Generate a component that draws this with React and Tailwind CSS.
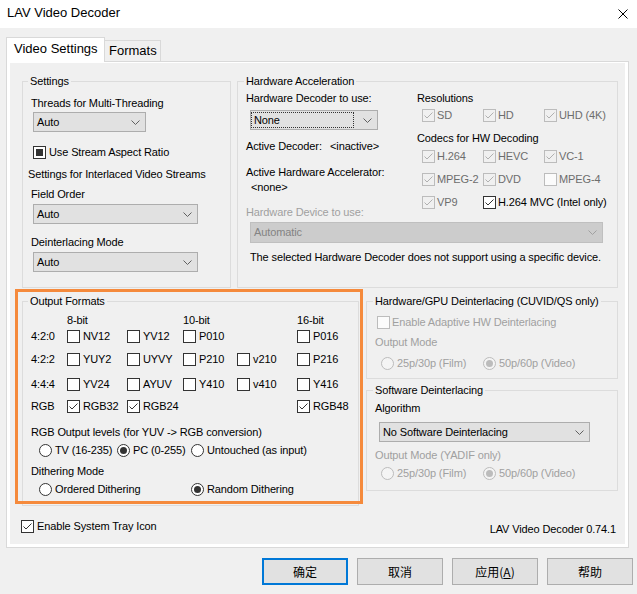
import React from "react";

const Chevron = ({ color = "#606060" }) => (
  <svg width="9" height="5" viewBox="0 0 9 5" className="shrink-0">
    <path d="M0.5 0.5 L4.5 4.5 L8.5 0.5" fill="none" stroke={color} strokeWidth="1" />
  </svg>
);

function Select({ value, className = "", disabled, focus }) {
  const skin = disabled
    ? "border-[#bfbfbf] bg-[#cccccc] text-[#838383]"
    : "border-[#adadad] bg-[#e1e1e1]";
  return (
    <div
      className={`flex items-center justify-between border ${skin} ${focus ? "pl-[0px]" : "pl-[3px]"} pr-[5px] shrink-0 ${className}`}
    >
      {focus ? (
        <span className="flex-1 h-[16px] mr-[9px] border border-dotted border-[#333] pl-[2px] flex items-center">
          {value}
        </span>
      ) : (
        <span className="whitespace-nowrap">{value}</span>
      )}
      <Chevron color={disabled ? "#a0a0a0" : "#606060"} />
    </div>
  );
}

function Box({ checked, disabled, indeterminate }) {
  const skin = disabled
    ? checked
      ? "border-[#bcbcbc] bg-[#f0f0f0]"
      : "border-[#bcbcbc] bg-[#fbfbfb]"
    : "border-[#333333] bg-white";
  return (
    <span className={`w-[13px] h-[13px] border ${skin} flex items-center justify-center shrink-0`}>
      {checked && (
        <svg width="11" height="11" viewBox="0 0 11 11">
          <path
            d="M1.5 5.5 L4 8 L9.5 2.5"
            fill="none"
            stroke={disabled ? "#b0b0b0" : "#333"}
            strokeWidth="1"
          />
        </svg>
      )}
      {indeterminate && <span className="w-[7px] h-[7px] bg-[#333]" />}
    </span>
  );
}

function Check({ label, checked, indeterminate, disabled, className = "", gap = "ml-[3px]", textClass = "text-[#6d6d6d]" }) {
  return (
    <div className={`flex items-center h-[13px] ${className}`}>
      <Box checked={checked} disabled={disabled} indeterminate={indeterminate} />
      <span className={`${gap} whitespace-nowrap ${disabled ? textClass : ""}`}>{label}</span>
    </div>
  );
}

function Radio({ checked, disabled }) {
  const skin = disabled ? "border-[#bcbcbc] bg-[#f4f4f4]" : "border-[#333333] bg-white";
  return (
    <span className={`w-[13px] h-[13px] rounded-full border ${skin} flex items-center justify-center shrink-0`}>
      {checked && (
        <span className={`w-[7px] h-[7px] rounded-full ${disabled ? "bg-[#bcbcbc]" : "bg-[#333]"}`} />
      )}
    </span>
  );
}

function RadioItem({ label, checked, disabled, className = "" }) {
  return (
    <div className={`flex items-center h-[13px] shrink-0 ${className}`}>
      <Radio checked={checked} disabled={disabled} />
      <span className={`ml-[3px] whitespace-nowrap ${disabled ? "text-[#a0a0a0]" : ""}`}>{label}</span>
    </div>
  );
}

function Group({ title, className = "", labelLeft = "left-[6px]", children }) {
  return (
    <div className={`relative border border-[#dcdcdc] shrink-0 ${className}`}>
      <span className={`absolute ${labelLeft} -top-[7px] px-[2px] bg-[#f0f0f0] leading-[13px] whitespace-nowrap`}>
        {title}
      </span>
      {children}
    </div>
  );
}

const fmtCols = ["w-[60px]", "w-[56px]", "w-[54px]", "w-[60px]", ""];

function FmtRow({ label, items, className = "" }) {
  return (
    <div className={`flex items-center h-[13px] ${className}`}>
      <span className="w-[36px] shrink-0">{label}</span>
      {items.map((it, i) => (
        <div key={i} className={`shrink-0 ${fmtCols[i]}`}>
          {it && <Check label={it[0]} checked={it[1]} />}
        </div>
      ))}
    </div>
  );
}

function Btn({ children, primary }) {
  return (
    <div
      className={`w-[86px] h-[27px] flex items-center justify-center bg-[#e1e1e1] ${
        primary ? "border-2 border-[#0078d7]" : "border border-[#adadad]"
      }`}
    >
      {children}
    </div>
  );
}

export default function App() {
  return (
    <div className="w-[637px] h-[594px] bg-[#f0f0f0] text-black text-[11px] leading-[13px] tracking-[-0.12px] font-['Liberation_Sans',Arial,sans-serif] flex flex-col overflow-hidden">
      {/* Title bar */}
      <div className="h-[28px] shrink-0 bg-white flex items-center justify-between pl-[7px] pr-[9px] pb-[2px]">
        <span className="text-[13px] leading-[16px] tracking-normal">LAV Video Decoder</span>
        <svg width="10" height="10" viewBox="0 0 10 10" className="mt-[1px]">
          <path d="M0.5 0.5 L9.5 9.5 M9.5 0.5 L0.5 9.5" stroke="#000" strokeWidth="1" />
        </svg>
      </div>

      {/* Tabs */}
      <div className="mt-[9px] h-[24px] flex items-end pl-[6px] shrink-0 tracking-normal">
        <div className="relative z-10 -mb-[1px] w-[99px] h-[25px] bg-white border border-b-0 border-[#d9d9d9] pl-[7px] pt-[3px] text-[13px] leading-[16px]">
          Video Settings
        </div>
        <div className="w-[56px] h-[21px] border-t border-r border-[#d9d9d9] pl-[4px] pt-[2px] text-[13px] leading-[16px]">
          Formats
        </div>
      </div>

      {/* Panel */}
      <div className="ml-[6px] w-[623px] h-[487px] shrink-0 border border-[#d9d9d9] bg-white pt-[1px] px-[3px] pb-[3px] flex">
        <div className="flex-1 bg-[#f0f0f0] flex flex-col pl-[12px] pt-[18px]">
          {/* Row 1 */}
          <div className="flex gap-[6px]">
            <Group title="Settings" labelLeft="left-[5px]" className="w-[209px] h-[207px]">
              <div className="flex flex-col items-start pl-[8px]">
                <div className="mt-[15px]">Threads for Multi-Threading</div>
                <Select value="Auto" className="mt-[2px] ml-[2px] w-[113px] h-[20px]" />
                <Check indeterminate label="Use Stream Aspect Ratio" className="mt-[14px] ml-[2px]" />
                <div className="mt-[9px] -ml-[3px]">Settings for Interlaced Video Streams</div>
                <div className="mt-[7px]">Field Order</div>
                <Select value="Auto" className="mt-[3px] ml-[2px] w-[165px] h-[20px]" />
                <div className="mt-[12px]">Deinterlacing Mode</div>
                <Select value="Auto" className="mt-[3px] ml-[2px] w-[165px] h-[20px]" />
              </div>
            </Group>

            <Group title="Hardware Acceleration" className="w-[381px] h-[207px]">
              <div className="flex h-[140px]">
                <div className="w-[179px] shrink-0 pl-[8px] flex flex-col items-start">
                  <div className="mt-[10px]">Hardware Decoder to use:</div>
                  <Select focus value="None" className="mt-[5px] ml-[4px] w-[128px] h-[20px]" />
                  <div className="mt-[10px] flex">
                    <span className="w-[84px]">Active Decoder:</span>
                    <span>&lt;inactive&gt;</span>
                  </div>
                  <div className="mt-[13px]">Active Hardware Accelerator:</div>
                  <div className="mt-[2px] ml-[5px]">&lt;none&gt;</div>
                  <div className="mt-[12px] text-[#a0a0a0]">Hardware Device to use:</div>
                </div>
                <div className="flex flex-col">
                  <div className="mt-[10px]">Resolutions</div>
                  <div className="mt-[4px] pl-[5px] flex">
                    <Check disabled checked label="SD" className="w-[61px]" gap="ml-[2px]" />
                    <Check disabled checked label="HD" className="w-[61px]" gap="ml-[2px]" />
                    <Check disabled checked label="UHD (4K)" gap="ml-[2px]" />
                  </div>
                  <div className="mt-[10px]">Codecs for HW Decoding</div>
                  <div className="mt-[5px] pl-[5px] flex">
                    <Check disabled checked label="H.264" className="w-[61px]" gap="ml-[2px]" />
                    <Check disabled checked label="HEVC" className="w-[61px]" gap="ml-[2px]" />
                    <Check disabled checked label="VC-1" gap="ml-[2px]" />
                  </div>
                  <div className="mt-[10px] pl-[5px] flex">
                    <Check disabled checked label="MPEG-2" className="w-[61px]" gap="ml-[2px]" />
                    <Check disabled checked label="DVD" className="w-[61px]" gap="ml-[2px]" />
                    <Check disabled label="MPEG-4" gap="ml-[2px]" />
                  </div>
                  <div className="mt-[10px] pl-[5px] flex">
                    <Check disabled checked label="VP9" className="w-[61px]" gap="ml-[2px]" />
                    <Check checked label="H.264 MVC (Intel only)" gap="ml-[2px]" />
                  </div>
                </div>
              </div>
              <Select disabled value="Automatic" className="ml-[12px] w-[353px] h-[21px]" />
              <div className="mt-[8px] ml-[12px] whitespace-nowrap">
                The selected Hardware Decoder does not support using a specific device.
              </div>
            </Group>
          </div>

          {/* Row 2 */}
          <div className="mt-[13px] flex gap-[7px] items-start">
            <div className="relative shrink-0">
              <Group title="Output Formats" labelLeft="left-[5px]" className="w-[337px] h-[205px]">
                <div className="pl-[8px] flex flex-col items-start">
                  <div className="mt-[12px] flex h-[13px]">
                    <span className="w-[36px]" />
                    <span className="w-[116px]">8-bit</span>
                    <span className="w-[114px]">10-bit</span>
                    <span>16-bit</span>
                  </div>
                  <FmtRow
                    label="4:2:0"
                    className="mt-[3px]"
                    items={[["NV12"], ["YV12"], ["P010"], null, ["P016"]]}
                  />
                  <FmtRow
                    label="4:2:2"
                    className="mt-[10px]"
                    items={[["YUY2"], ["UYVY"], ["P210"], ["v210"], ["P216"]]}
                  />
                  <FmtRow
                    label="4:4:4"
                    className="mt-[12px]"
                    items={[["YV24"], ["AYUV"], ["Y410"], ["v410"], ["Y416"]]}
                  />
                  <FmtRow
                    label="RGB"
                    className="mt-[9px]"
                    items={[["RGB32", true], ["RGB24", true], null, null, ["RGB48", true]]}
                  />
                  <div className="mt-[13px]">RGB Output levels (for YUV -&gt; RGB conversion)</div>
                  <div className="mt-[5px] ml-[8px] flex">
                    <RadioItem label="TV (16-235)" className="w-[78px]" />
                    <RadioItem label="PC (0-255)" checked className="w-[74px]" />
                    <RadioItem label="Untouched (as input)" />
                  </div>
                  <div className="mt-[8px]">Dithering Mode</div>
                  <div className="mt-[5px] ml-[8px] flex">
                    <RadioItem label="Ordered Dithering" className="w-[152px]" />
                    <RadioItem label="Random Dithering" checked />
                  </div>
                </div>
              </Group>
              <div className="absolute -left-[7px] -top-[12px] w-[348px] h-[215px] border-[3px] border-[#f58a3c] pointer-events-none" />
            </div>

            <div className="flex flex-col gap-[11px] w-[252px] shrink-0">
              <Group title="Hardware/GPU Deinterlacing (CUVID/QS only)" className="h-[78px]">
                <div className="pl-[8px] flex flex-col items-start">
                  <Check
                    disabled
                    label="Enable Adaptive HW Deinterlacing"
                    className="mt-[14px] ml-[2px]"
                    gap="ml-[2px]"
                    textClass="text-[#a0a0a0]"
                  />
                  <div className="mt-[7px] text-[#a0a0a0]">Output Mode</div>
                  <div className="mt-[8px] ml-[6px] flex">
                    <RadioItem disabled label="25p/30p (Film)" className="w-[102px]" />
                    <RadioItem disabled checked label="50p/60p (Video)" />
                  </div>
                </div>
              </Group>
              <Group title="Software Deinterlacing" className="h-[101px]">
                <div className="pl-[8px] flex flex-col items-start">
                  <div className="mt-[11px]">Algorithm</div>
                  <Select value="No Software Deinterlacing" className="mt-[7px] ml-[4px] w-[211px] h-[20px]" />
                  <div className="mt-[7px] text-[#a0a0a0]">Output Mode (YADIF only)</div>
                  <div className="mt-[5px] ml-[6px] flex">
                    <RadioItem disabled label="25p/30p (Film)" className="w-[102px]" />
                    <RadioItem disabled checked label="50p/60p (Video)" />
                  </div>
                </div>
              </Group>
            </div>
          </div>

          {/* Bottom row */}
          <div className="mt-[14px] flex items-start justify-between pr-[9px] -ml-[1px]">
            <Check checked label="Enable System Tray Icon" />
            <span className="mt-[3px]">LAV Video Decoder 0.74.1</span>
          </div>
        </div>
      </div>

      {/* Buttons */}
      <div className="mt-[10px] flex justify-end gap-[9px] pr-[4px] font-['Noto_Sans_CJK_SC',sans-serif] text-[12px] leading-[16px] tracking-normal">
        <Btn primary>确定</Btn>
        <Btn>取消</Btn>
        <Btn>
          应用(<span className="underline">A</span>)
        </Btn>
        <Btn>帮助</Btn>
      </div>
    </div>
  );
}
